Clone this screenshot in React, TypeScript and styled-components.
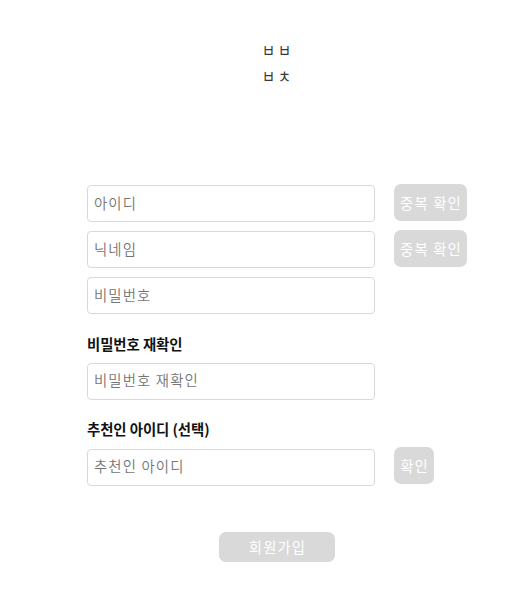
import React from "react";
import styled, { createGlobalStyle } from "styled-components";

const GlobalStyle = createGlobalStyle`
  *, *::before, *::after { box-sizing: border-box; }
  body {
    margin: 0;
    background: #fff;
    color: #111;
    font-family: "Noto Sans CJK KR", "Noto Sans", sans-serif;
    font-size: 14.4px;
  }
`;

const Page = styled.main`
  display: flex;
  flex-direction: column;
  height: 605px;
  padding: 37px 65px 43px 87px;
  overflow: hidden;
`;

const Logo = styled.h1`
  flex: none;
  height: 52px;
  margin: 0 0 95px 175px;
  color: #383838;
  font-size: 15px;
  font-weight: 400;
  letter-spacing: 3.2px;
  line-height: 26px;
`;

const LogoLine = styled.span`
  display: block;
  transform: scale(0.94, 1.16);
  transform-origin: 0 50%;
`;

const Row = styled.div<{ $gap: number }>`
  display: flex;
  flex: none;
  align-items: flex-start;
  gap: 19px;
  height: 38px;
  margin-bottom: ${({ $gap }) => $gap}px;
`;

const Field = styled.input<{ $top?: number; $lift?: number }>`
  width: 288px;
  height: 37px;
  margin: ${({ $top = 1 }) => $top}px 0 0;
  padding: 0 6px ${({ $lift = 2 }) => $lift}px;
  border: 1px solid #d9d9d9;
  border-radius: 4px;
  outline: none;
  background: #fff;
  font: inherit;
  font-weight: 350;
  letter-spacing: 1.12px;

  &::placeholder {
    color: #757575;
    opacity: 1;
  }
`;

const Button = styled.button<{ $width: number; $height?: number }>`
  display: flex;
  flex: none;
  align-items: center;
  justify-content: center;
  width: ${({ $width }) => $width}px;
  height: ${({ $height = 37 }) => $height}px;
  padding: 0 0 0 1px;
  border: 0;
  border-radius: 7px;
  background: #d9d9d9;
  color: #fff;
  font: inherit;
  letter-spacing: 1.12px;
  white-space: nowrap;
`;

const Label = styled.label`
  flex: none;
  height: 29px;
  font-weight: 700;
  letter-spacing: -0.06px;
  line-height: 22px;
`;

const Submit = styled(Button)`
  margin-left: 132px;
  padding-bottom: 2px;
`;

export default function App() {
  return (
    <>
      <GlobalStyle />
      <Page>
        <Logo>
          <LogoLine>ㅂㅂ</LogoLine>
          <LogoLine>ㅂㅊ</LogoLine>
        </Logo>
        <Row $gap={8}>
          <Field placeholder="아이디" />
          <Button $width={73}>중복 확인</Button>
        </Row>
        <Row $gap={8}>
          <Field placeholder="닉네임" />
          <Button $width={73}>중복 확인</Button>
        </Row>
        <Row $gap={19}>
          <Field type="password" placeholder="비밀번호" />
        </Row>
        <Label htmlFor="password-check">비밀번호 재확인</Label>
        <Row $gap={18}>
          <Field id="password-check" $lift={4} type="password" placeholder="비밀번호 재확인" />
        </Row>
        <Label htmlFor="referrer">추천인 아이디 (선택)</Label>
        <Row $gap={47}>
          <Field id="referrer" $top={2} $lift={4} placeholder="추천인 아이디" />
          <Button $width={40}>확인</Button>
        </Row>
        <Submit $width={116} $height={30}>회원가입</Submit>
      </Page>
    </>
  );
}
